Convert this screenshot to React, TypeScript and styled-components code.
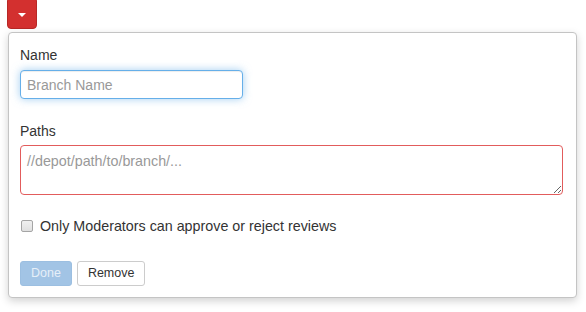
import React from "react"
import styled, { createGlobalStyle } from "styled-components"

const Global = createGlobalStyle`
  html, body { margin: 0; padding: 0; background: #fff; }
  body {
    font-family: "Liberation Sans", Arial, sans-serif;
    font-size: 14px;
    color: #333;
  }
  * { box-sizing: border-box; }
`

export default function App() {
  return (
    <>
      <Global />
      <S.Page>
        <S.Toggle aria-label="toggle">
          <S.Caret />
        </S.Toggle>
        <S.Panel>
          <S.Group>
            <S.Label>Name</S.Label>
            <S.Input placeholder="Branch Name" autoFocus />
          </S.Group>
          <S.Group>
            <S.Label>Paths</S.Label>
            <S.Textarea placeholder="//depot/path/to/branch/..." />
          </S.Group>
          <S.CheckRow>
            <S.Check type="checkbox" />
            <span>Only Moderators can approve or reject reviews</span>
          </S.CheckRow>
          <S.Actions>
            <S.Button primary disabled>Done</S.Button>
            <S.Button>Remove</S.Button>
          </S.Actions>
        </S.Panel>
      </S.Page>
    </>
  )
}

const S = {
  Page: styled.div`
    padding-left: 7px;
    width: 586px;
    height: 312px;
    overflow: hidden;
  `,
  Toggle: styled.button`
    display: flex;
    align-items: center;
    justify-content: center;
    width: 30px;
    height: 32px;
    margin-top: -3px;
    padding: 3px 0 0;
    background: #d3302f;
    border: 1px solid #b72826;
    border-radius: 4px;
  `,
  Caret: styled.span`
    width: 0;
    height: 0;
    border-top: 4px solid #fff;
    border-left: 4px solid transparent;
    border-right: 4px solid transparent;
  `,
  Panel: styled.div`
    margin: 3px 0 0 1px;
    width: 569px;
    height: 266px;
    padding: 12px 13px 12px 11px;
    background: #fff;
    border: 1px solid #c4c4c4;
    border-radius: 4px;
    box-shadow: 0 3px 8px rgba(0, 0, 0, 0.18);
    display: flex;
    flex-direction: column;
  `,
  Group: styled.div`
    margin-bottom: 22px;
    &:nth-child(2) { margin-bottom: 21px; }
  `,
  Label: styled.label`
    display: block;
    line-height: 20px;
    margin-bottom: 5px;
    & + textarea { margin-top: -1px; }
  `,
  Input: styled.input`
    display: block;
    width: 223px;
    height: 29px;
    padding: 0 6px;
    font: inherit;
    color: #555;
    border: 1px solid #66afe9;
    border-radius: 4px;
    outline: none;
    box-shadow: inset 0 1px 1px rgba(0, 0, 0, 0.075), 0 0 8px rgba(102, 175, 233, 0.6);
    &::placeholder { color: #999; }
  `,
  Textarea: styled.textarea`
    display: block;
    width: 543px;
    height: 50px;
    padding: 5px 6px;
    font: inherit;
    font-size: 14.3px;
    line-height: 20px;
    color: #555;
    border: 1px solid #e25c5c;
    border-radius: 4px;
    outline: none;
    resize: vertical;
    &::placeholder { color: #999; }
  `,
  CheckRow: styled.label`
    display: flex;
    align-items: center;
    gap: 7px;
    font-size: 14.3px;
    line-height: 20px;
  `,
  Check: styled.input`
    appearance: none;
    margin: 0 0 0 1px;
    width: 12px;
    height: 12px;
    border: 1px solid #a5a5a5;
    border-radius: 2px;
    background: linear-gradient(#f0f0f0, #e0e0e0);
  `,
  Actions: styled.div`
    display: flex;
    gap: 5px;
    margin-top: 25px;
  `,
  Button: styled.button<{ primary?: boolean }>`
    height: 25px;
    padding: 0 10px;
    font-family: inherit;
    font-size: 12.5px;
    line-height: 17px;
    border-radius: 3px;
    border: 1px solid ${({ primary }) => (primary ? "#9cbfe1" : "#ccc")};
    background: ${({ primary }) => (primary ? "#a2c4e5" : "#fff")};
    color: ${({ primary }) => (primary ? "#e6eff8" : "#333")};
  `,
}
